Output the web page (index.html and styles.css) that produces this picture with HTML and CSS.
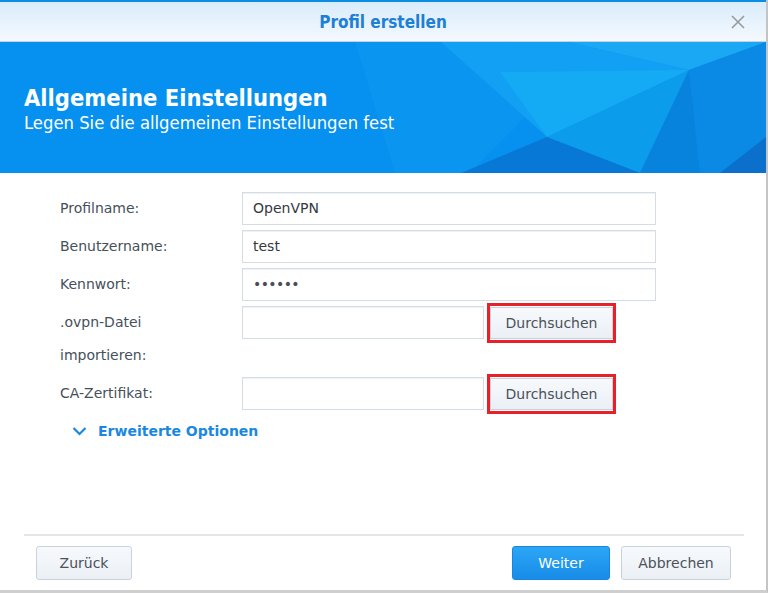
FILE: index.html
```html
<!doctype html>
<html>
<head>
  <meta charset="utf-8"/>
  <title>Profil erstellen</title>
  <link rel="stylesheet" href="styles.css">
</head>
<body>
<div class="dialog">
  <div class="topline"></div>
  <div class="titlebar">
    <span></span>
    <span class="title">Profil erstellen</span>
    <span class="close">
      <svg width="14" height="14" viewBox="0 0 14 14"><path d="M1 1 L13 13 M13 1 L1 13" stroke="#9a9a9a" stroke-width="1.6" fill="none"/></svg>
    </span>
  </div>

  <div class="banner">
    <svg class="facets" width="766" height="131" viewBox="0 0 766 131">
      <polygon points="355,0 600,0 470,131 395,131" fill="#0995f0"/>
      <polygon points="441,0 569,0 689,28 547,95" fill="#11a0f3"/>
      <polygon points="500,30 689,28 547,95" fill="#14abf4"/>
      <polygon points="547,95 689,28 640,131" fill="#0b9deb"/>
      <polygon points="569,0 766,0 689,28" fill="#1aa8f5"/>
      <polygon points="689,28 766,0 766,131 700,131" fill="#0a8ae4"/>
      <polygon points="689,28 700,131 640,131" fill="#0883dd"/>
      <polygon points="720,131 766,95 766,131" fill="#0a70cc"/>
      <polygon points="461,131 547,95 640,131" fill="#0878d6"/>
    </svg>
    <div class="banner-text">
      <h1>Allgemeine Einstellungen</h1>
      <p>Legen Sie die allgemeinen Einstellungen fest</p>
    </div>
  </div>

  <div class="form">
    <div class="row">
      <label>Profilname:</label>
      <div class="field wide">OpenVPN</div>
    </div>
    <div class="row">
      <label>Benutzername:</label>
      <div class="field wide">test</div>
    </div>
    <div class="row">
      <label>Kennwort:</label>
      <div class="field wide dots">&bull;&bull;&bull;&bull;&bull;&bull;</div>
    </div>
    <div class="row">
      <label>.ovpn-Datei<br>importieren:</label>
      <div class="field short"></div>
      <div class="mark"><button class="btn">Durchsuchen</button></div>
    </div>
    <div class="row">
      <label>CA-Zertifikat:</label>
      <div class="field short"></div>
      <div class="mark"><button class="btn">Durchsuchen</button></div>
    </div>
    <div class="advanced">
      <svg width="15" height="10" viewBox="0 0 15 10"><path d="M1.5 2 L7.5 8 L13.5 2" stroke="#1a88e0" stroke-width="2.2" fill="none"/></svg>
      <span>Erweiterte Optionen</span>
    </div>
  </div>

  <div class="footer">
    <button class="btn">Zur&uuml;ck</button>
    <span class="spacer"></span>
    <button class="btn primary">Weiter</button>
    <button class="btn cancel">Abbrechen</button>
  </div>
</div>
</body>
</html>
```

FILE: styles.css
```css
html, body {
  margin: 0;
  background: #fff;
}
.dialog {
  width: 766px;
  height: 590px;
  border-right: 2px solid #c4c4c4;
  border-bottom: 3px solid #cfcfcf;
  display: flex;
  flex-direction: column;
  font-family: "DejaVu Sans", Verdana, sans-serif;
  color: #414b55;
  overflow: hidden;
}
.topline {
  height: 2px;
  background: #0a8ce0;
}
.titlebar {
  height: 39px;
  display: grid;
  grid-template-columns: 1fr auto 1fr;
  align-items: center;
  background: linear-gradient(#d9ecfb, #f4f9fe);
  border-bottom: 1px solid #c5d3df;
}
.title {
  font-family: "DejaVu Sans Condensed", "DejaVu Sans", sans-serif;
  font-weight: bold;
  font-size: 17px;
  color: #1e7fd6;
}
.close {
  justify-self: end;
  margin-right: 21px;
  display: flex;
}
.banner {
  position: relative;
  height: 131px;
  background: #0690ef;
  color: #fff;
}
.facets {
  position: absolute;
  left: 0;
  top: 0;
}
.banner-text {
  position: relative;
  padding: 42px 0 0 24px;
  font-family: "DejaVu Sans Condensed", "DejaVu Sans", sans-serif;
}
.banner h1 {
  margin: 0;
  font-size: 23.5px;
  line-height: 28px;
}
.banner p {
  margin: 0;
  font-size: 18.3px;
  line-height: 22px;
}
.form {
  padding: 19px 0 0 60px;
  display: flex;
  flex-direction: column;
  gap: 5px;
  font-size: 14px;
}
.row {
  display: flex;
  align-items: flex-start;
}
.row label {
  width: 182px;
  line-height: 33px;
  color: #46505a;
}
.field {
  height: 31px;
  border: 1px solid #d4dce5;
  box-shadow: inset 0 1px 1px #eef2f6;
  line-height: 31px;
  padding-left: 10px;
  box-sizing: content-box;
  color: #35393e;
}
.wide {
  width: 402px;
}
.short {
  width: 230px;
}
.dots {
  letter-spacing: -0.6px;
  color: #4a4f55;
}
.mark {
  margin: -3px 0 -3px 3px;
  border: 3px solid #e8202a;
  display: flex;
}
.mark:last-child {
  padding: 1px 0;
}
.btn {
  font-family: "DejaVu Sans", Verdana, sans-serif;
  font-size: 14px;
  color: #4a525a;
  height: 32px;
  padding: 0 14px;
  border: 1px solid #c8d2dc;
  border-radius: 3px;
  background: linear-gradient(#f7f9fc, #ebf0f5);
}
.mark .btn {
  width: 123px;
  border-radius: 0;
}
.advanced {
  display: flex;
  align-items: center;
  gap: 11px;
  padding-left: 12px;
  height: 30px;
  font-weight: bold;
  font-size: 14px;
  color: #1a88e0;
}
.footer {
  margin: auto 22px 0 24px;
  border-top: 2px solid #e6e6e6;
  padding: 10px 13px 10px 12px;
  display: flex;
  gap: 11px;
}
.footer .btn {
  height: 34px;
  min-width: 96px;
}
.footer .cancel {
  min-width: 110px;
}
.spacer {
  flex: 1;
}
.btn.primary {
  color: #fff;
  background: linear-gradient(#2ca6f6, #178ce8);
  border-color: #1886dc;
  min-width: 98px;
}
```
